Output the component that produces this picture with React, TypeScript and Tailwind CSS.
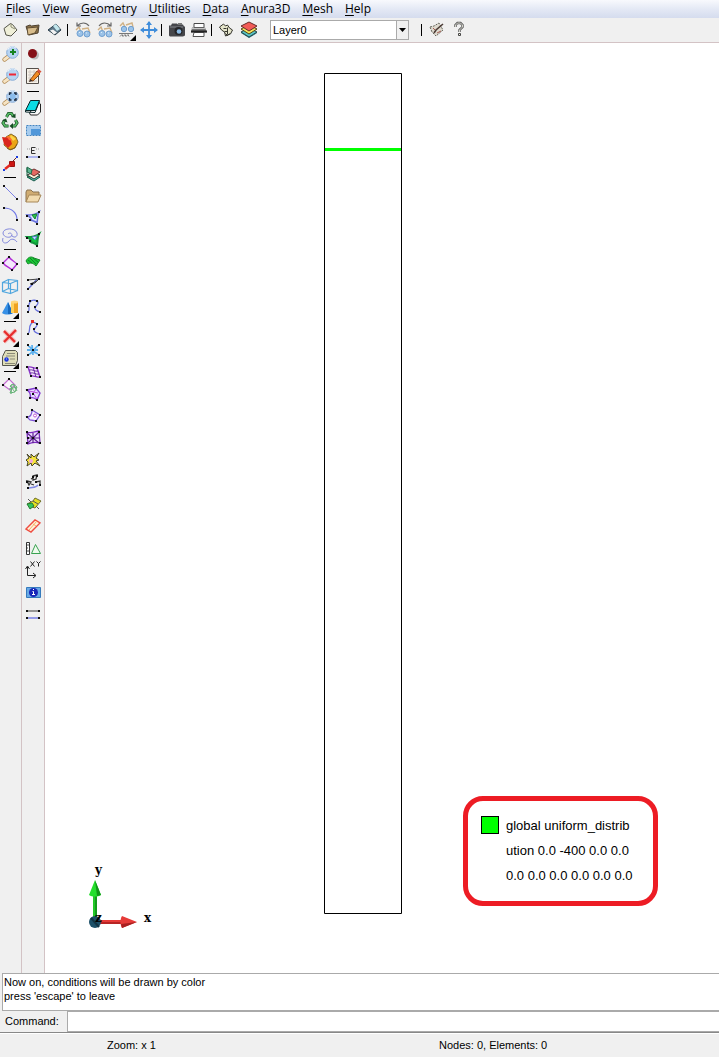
import { useState, type ReactNode } from "react";

type Point = [number, number];
type Tool = { name: string; icon: ReactNode; more?: boolean };

function Icon({ children }: { children: ReactNode }) {
  return (
    <svg viewBox="0 0 18 18" className="size-[18px] shrink-0" fill="none" aria-hidden="true">
      {children}
    </svg>
  );
}

function Nodes({ at, color = "#111" }: { at: Point[]; color?: string }) {
  return (
    <>
      {at.map(([x, y]) => (
        <rect key={`${x}-${y}`} x={x - 1} y={y - 1} width="2" height="2" fill={color} />
      ))}
    </>
  );
}

function Lens({ children }: { children?: ReactNode }) {
  return (
    <Icon>
      <path d="M7.500 11.500 3.500 14.500" stroke="#b08850" strokeWidth="4.4" strokeLinecap="round" />
      <path d="M7 12 3.500 14.500" stroke="#f6e4c4" strokeWidth="2.8" strokeLinecap="round" />
      <circle cx="11.500" cy="7.500" r="5.8" fill="#b7d4f2" stroke="#86abd6" />
      <path d="M6.500 5a5.500 5.500 0 0 1 8.500-2" stroke="#eef7ff" />
      {children}
    </Icon>
  );
}

function Glasses({ children }: { children: ReactNode }) {
  return (
    <Icon>
      <path d="m2 9 3-3 2 5M8 8l6-1 2 5" stroke="#d0b184" strokeWidth="1.4" />
      <circle cx="6" cy="12.500" r="3" fill="#9cc3e8" stroke="#6f9fd0" />
      <circle cx="13" cy="13" r="3" fill="#9cc3e8" stroke="#6f9fd0" />
      <path d="M5 11.500h1m6 .5h1" stroke="#dceefb" />
      {children}
    </Icon>
  );
}

const fileTools: Tool[] = [
  { name: "New", icon: <Icon><path d="M2 7.500 8.500 2.500l2 1L15 9l-6 6-5-1z" fill="#efefd8" stroke="#55554a" /><path d="M9 3v3l4 2" stroke="#8e8e72" /></Icon> },
  { name: "Open", icon: <Icon><path d="M2 5.500 6 4l1.500 1L15 4l-1 8-9 2z" fill="#8d7348" stroke="#4c4030" /><path d="m3 7 11-1-3 6-7 2z" fill="#d8bd8c" stroke="#5e4d32" /></Icon> },
  { name: "Save", icon: <Icon><path d="m2 9 8-6 5 6-6 5z" fill="#5d7888" stroke="#2c3e49" /><path d="m7 5 3-2 4 5-3 2z" fill="#c3e7ed" /><path d="m4 9.500 3-1 4 3-3 2z" fill="#f4f4f4" /></Icon> },
];
const viewTools: Tool[] = [
  { name: "Previous view", icon: <Glasses><path d="M3 5C7 1 12 1 15 5M3 1.500v3.500h4" stroke="#666" strokeWidth="1.2" /></Glasses> },
  { name: "Next view", icon: <Glasses><path d="M3 5C6 1 11 1 15 5M15 1.500v3.500h-4" stroke="#666" strokeWidth="1.2" /></Glasses> },
  { name: "Saved views", more: true, icon: <Icon><path d="m2 5 3-3 2 4M8 4l6-2 1 4" stroke="#d0b184" strokeWidth="1.4" /><circle cx="6" cy="8" r="2.7" fill="#9cc3e8" stroke="#6f9fd0" /><circle cx="13" cy="8" r="2.7" fill="#9cc3e8" stroke="#6f9fd0" /><path d="M1 12.500h14M2 15.500l2-2 1 2 2-2 1 2 2-2 1 2" stroke="#777" /></Icon> },
  { name: "Pan", icon: <Icon><path d="M9 1v16M1 9h16" stroke="#3f8ddb" strokeWidth="1.8" /><path d="m9 0 3 4H6zM9 18l3-4H6zM0 9l4-3v6zM18 9l-4-3v6z" fill="#3f8ddb" /></Icon> },
];
const printTools: Tool[] = [
  { name: "Snapshot", icon: <Icon><path d="M1 4.500h2l1-2h5l1 1h5l1 2h1v9l-2 1H2l-1-1z" fill="#45464a" /><path d="M2 6h13" stroke="#85878c" /><path d="M10 2h4v2h-4z" fill="#777" /><circle cx="10.500" cy="10" r="4" fill="#252629" /><circle cx="11" cy="10.500" r="2.3" fill="#8cbbe5" /></Icon> },
  { name: "Print", icon: <Icon><path d="M4 2.500h10v4H4z" fill="#fff" stroke="#4a4a4a" /><path d="M2 6.500h13l2 5H1z" fill="#777" /><path d="M2 7.500h13" stroke="#c4c4c4" /><path d="M4 11.500h10v4H3z" fill="#fff" stroke="#555" /><path d="M1 10.500h16" stroke="#222" strokeWidth="2" /></Icon> },
];
const modeTools: Tool[] = [
  { name: "Toggle process", icon: <Icon><path d="m1.500 6 4-3 2 2 2-1 2 3 3 2-2 4-5 2-1-4-3-2z" fill="#e5e5cb" stroke="#34342c" /><path d="M5.500 7.500h3m-2 3h3m0-4v7m-2-1 2 2 2-2" stroke="#35352d" /></Icon> },
  { name: "Layers", icon: <Icon><path d="m1 11 8 5 8-5v1l-8 5-8-5z" fill="#176a78" /><path d="m1 11 8-4 8 4-8 5z" fill="#54c7ca" stroke="#25474a" /><path d="m1 8 8-4 8 4-8 5z" fill="#f3e65b" stroke="#544318" /><path d="m1 5 8-4 8 4-8 5z" fill="#f25b56" stroke="#662b2b" /></Icon> },
];
const helpTools: Tool[] = [
  { name: "Preferences", icon: <Icon><path d="m2 6 4-1 5-3 4 7-7 6-4-4z" fill="#ddd9ce" stroke="#66665c" strokeDasharray="2 1" /><path d="m6 12 2-3 7-6" stroke="#4c3c36" strokeWidth="1.6" /><path d="m5 7 2 2m2 3 4-2" stroke="#a65b50" /></Icon> },
  { name: "Help", icon: <Icon><path d="M5.500 6V4l2-2h3l2 2v2L9.500 9v2" stroke="#555" strokeWidth="2.4" /><path d="M5.500 6V4l2-2h3l2 2v2L9.500 9v2" stroke="#f4f4e8" strokeWidth=".8" /><path d="M8.500 12.500h2v2h-2z" fill="#f4f4e8" stroke="#444" /></Icon> },
];

const leftTools: Tool[][] = [
  [
    { name: "Zoom in", icon: <Lens><path d="M12 4v6M9 7h6" stroke="#168322" strokeWidth="2" /></Lens> },
    { name: "Zoom out", icon: <Lens><path d="M8 7.500h7" stroke="#ee2635" strokeWidth="2" /></Lens> },
    { name: "Zoom frame", icon: <Lens><path d="M9 4.500h5.500v6H9z" fill="#8abcec" /><path d="M8.500 6V4h2m2.500 0h2v2m0 3v2h-2m-2.500 0h-2V9" stroke="#17263a" strokeWidth="1.4" /></Lens> },
    { name: "Redraw", icon: <Icon><path d="m5.500 6 2-3.500h3l2 3M14.500 9l1.500 3-2 3h-3M7.500 15H4l-2-3 2-3" stroke="#174e24" strokeWidth="3" /><path d="m5.500 6 2-3.500h3l2 3M14.500 9l1.500 3-2 3h-3M7.500 15H4l-2-3 2-3" stroke="#58bd65" strokeWidth="1.6" /><path d="m10 6 4.500 1V2.500zM12 12v6l-3.500-3zM1 9.500l4-2 1.500 4z" fill="#174e24" /></Icon> },
    { name: "Render", icon: <Icon><path d="m5 4 5-3 5 3 2 5-3 6-5 2-6-5z" fill="#eba515" stroke="#856b25" /><path d="m1 4 8 1 2 6-4 4-4-4z" fill="#d9261d" /><path d="m5 3 5 1 2 4-4-1z" fill="#ff6b31" /><path d="m10 2 5 4-3 2-3-4z" fill="#f9d548" /><path d="M6 15c3 3 8 1 10-4" stroke="#805918" /></Icon> },
    { name: "Label", icon: <Icon><path d="M3 15 15 3" stroke="#6c2222" /><path d="M8.500 6.500h5v5h-5z" fill="#cc1714" stroke="#9a1411" /><path d="m4 14 5-4" stroke="#e22720" strokeWidth="2.5" /><Nodes at={[[3, 15], [16, 2]]} color="#1a3ce0" /></Icon> },
  ],
  [
    { name: "Create line", icon: <Icon><path d="m3 3 13 13" stroke="#7c82e5" /><Nodes at={[[3, 3], [16, 16]]} /></Icon> },
    { name: "Create arc", icon: <Icon><path d="M3 3c8 0 13 5 13 12" stroke="#7078e6" strokeWidth="1.2" /><Nodes at={[[3, 3], [16, 15]]} /></Icon> },
    { name: "Create curve", icon: <Icon><path d="M7 7c3-3 6 2 2 3-3 1-7-1-7-4 0-5 12-6 14 0 1 5-4 5-6 2M2 11c-2 6 4 6 6 3s6-2 8 1" stroke="#858bdd" /></Icon> },
  ],
  [
    { name: "Create surface", icon: <Icon><path d="M8 2c2 3 5 4 8 7l-5 6C9 12 5 12 2 8z" fill="#f4e8fc" stroke="#b02ad7" strokeWidth="1.4" /><Nodes at={[[8, 2], [16, 9], [11, 15], [2, 8]]} /></Icon> },
    { name: "Create volume", icon: <Icon><path d="m1.500 5.500 8 1v10l-8-2zM7.500 2.500l9 1v10l-9-2zM1.500 5.500l6-3m2 4 7-3m-7 13 7-3m-15 1 6-3" stroke="#51a7de" strokeWidth="1.200" /></Icon> },
    { name: "Create object", more: true, icon: <Icon><path d="M1 14 7 3l5 11c-3 2-8 2-11 0z" fill="#3690e6" /><path d="m7 3 5 11c-2 1-3 1-5 1z" fill="#1769be" /><path d="M10 3h7v11h-7z" fill="#efa321" /><path d="M10 3h3v11h-3z" fill="#ffd05b" /><ellipse cx="13.500" cy="3" rx="3.5" ry="1.5" fill="#ffd67b" /></Icon> },
  ],
  [
    { name: "Delete", more: true, icon: <Icon><path d="m3 4 11 11M15 3 3 15" stroke="#f3b2b0" strokeWidth="4" /><path d="m3 4 11 11M15 3 3 15" stroke="#e62b2b" strokeWidth="2" /></Icon> },
    { name: "List", more: true, icon: <Icon><path d="M4.500 1.500h10l2 2v8l-2 5h-13v-9z" fill="#deddb9" stroke="#55554c" /><path d="M6 4.500h8M5 7h9M9 10h5M4 14.500h10" stroke="#8a8a78" /><circle cx="5.500" cy="10.500" r="2.2" fill="#1a34e0" /><path d="M5 10h1" stroke="#a5b9ff" /></Icon> },
  ],
  [
    { name: "Edit mesh", icon: <Icon><path d="m2 8 6-6 6 6-5 5z" fill="#faf3fb" stroke="#c36bd0" strokeWidth="1.2" /><path d="m9 9 3-2 4 3-2 5-5 1 2-5zM8 12l8-2m-7-1 5 6m-3-8-1 10M12 7l4 7" stroke="#66b377" /><Nodes at={[[2, 8], [8, 2]]} /></Icon> },
  ],
];

const rightTop: Tool[] = [
  { name: "Point", icon: <Icon><circle cx="10.500" cy="10" r="4.5" fill="#bababa" /><circle cx="8.500" cy="8.500" r="4.5" fill="#851017" /></Icon> },
  { name: "Edit notes", icon: <Icon><path d="M2.500 1.500h12v15h-12z" fill="#f7f2e8" stroke="#55504c" /><path d="M4 5h9M4 8h9M4 11h9M4 14h9M6 3v12m4-12v12" stroke="#d2cac5" /><path d="m6 13 7-9 3 3-7 7z" fill="#f28a21" stroke="#8c4d17" /><path d="m13 4 1.500-2 3 2.500-2 2z" fill="#d95239" /><path d="m5 15 1-3 3 2z" fill="#3d2b23" /></Icon> },
];
const rightTools: Tool[] = [
  { name: "Data", icon: <Icon><path d="m14 3 2.500 2v8l-3 3h-7l-1-2z" fill="#fafafa" stroke="#222" /><path d="M6.500 1.500h9l-4 10h-10z" fill="#0bdce4" stroke="#08272a" /><path d="M1.500 11.500v1.500l9.500.5 4.500-11" stroke="#08272a" /></Icon> },
  { name: "Select region", icon: <Icon><path d="M2.500 4.500h14v10h-14z" fill="#a6ccef" stroke="#4384c0" strokeDasharray="2 1" /><path d="M7 8h9v6H7z" fill="#5097d9" /></Icon> },
  { name: "Elements", icon: <Icon><path d="M3 6h3m6 0h3" stroke="#999" strokeDasharray="1 1" /><path d="M11.500 4.500h-4v6h4M7.500 7.500h3" stroke="#333" /><path d="M4 14h11" stroke="#9aa4f1" strokeWidth="1.5" /><Nodes at={[[3, 14], [15, 14]]} /></Icon> },
  { name: "Layer tools", icon: <Icon><path d="m3 12 7-3 6 3-6 4z" fill="#4cc4b4" stroke="#1c5a4a" /><path d="m3 10 7-3 6 3-6 4z" fill="#f6f2d8" stroke="#333" /><path d="m4 7 6-3 6 3-6 4z" fill="#e66a62" stroke="#71302e" /><path d="m3 2 5 3-1 4-4-2z" fill="#5fb592" stroke="#226b4b" /><path d="M3 3v8l5 4" stroke="#226b4b" /></Icon> },
  { name: "Group", icon: <Icon><path d="M2 15V5l1-2h4l2 2h6v3" fill="#d0ac72" stroke="#8b7350" /><path d="M5 8h12l-3 7H2z" fill="#f2dbae" stroke="#a78758" /></Icon> },
  { name: "Surface by points", icon: <Icon><path d="M3 6c5 0 9-1 12-3-2 4-1 7-2 11-2-2-4-2-6-3 1-3-2-3-4-5z" fill="#dfe6ff" stroke="#6771dc" strokeWidth="1.5" /><path d="m8 6 5-1-2 5z" fill="#28c84e" stroke="#158131" /><Nodes at={[[3, 7], [15, 3], [13, 15], [6, 11]]} /></Icon> },
  { name: "Filled surface", icon: <Icon><path d="M3 6c5 0 9-1 12-3-2 4-1 7-2 11-2-2-4-2-6-3 1-3-2-3-4-5z" fill="#12c840" stroke="#12963c" strokeWidth="2" /><path d="m8 6 5-1-2 4z" fill="#c4e5fb" stroke="#5b78d0" /><Nodes at={[[3, 7], [15, 3], [13, 15], [6, 10]]} /></Icon> },
  { name: "Parametric surface", icon: <Icon><path d="M2 8c2-4 5-5 8-3 2 1 4 1 6 2l-4 6c-4-4-6-3-8-2z" fill="#18c834" stroke="#16872a" /><path d="m4 7 4 3M6 5l6 6M9 5l5 4" stroke="#128027" /></Icon> },
  { name: "Tangent line", icon: <Icon><path d="M4 14c3-3 6-6 9-10" stroke="#6570d6" strokeWidth="1.3" /><path d="m3 5 12-1-4 4-5 1 7-3" stroke="#444" /><Nodes at={[[4, 14], [4, 5], [15, 4], [8, 9]]} /></Icon> },
  { name: "Spline", icon: <Icon><path d="M4 15c3-3-1-6 2-10 2-3 8-2 8 1 0 2-3 3-3 5s2 3 5 4" stroke="#6972dd" strokeWidth="1.3" /><Nodes at={[[4, 15], [4, 9], [6, 4], [13, 4], [11, 10], [16, 15]]} /></Icon> },
  { name: "Edit spline", icon: <Icon><path d="M4 15c3-3 0-6 3-10 2-3 6-1 6 1 0 2-3 3-3 5s2 3 6 4" stroke="#6972dd" strokeWidth="1.3" /><Nodes at={[[4, 15], [13, 5], [10, 10], [16, 15]]} /><path d="M7 1h3v3H7z" fill="#e42c27" /></Icon> },
  { name: "Explode", icon: <Icon><path d="M4 5c4 1 3 6 10 8M4 14c5-2 6-7 11-10M8 4l1 10M3 9h11" stroke="#5ab0ee" strokeWidth="1.8" /><Nodes at={[[4, 4], [15, 4], [4, 14], [15, 14], [9, 9]]} /></Icon> },
  { name: "Ruled surface", icon: <Icon><path d="M4 4c4-1 6 2 9 1l3 9c-4 1-6-2-9-1z" fill="#f5e7fb" stroke="#8a32c9" strokeWidth="1.4" /><path d="M5 7c4-1 6 2 9 1M6 10c4-1 6 2 9 1M9 4l3 10" stroke="#6b2fa3" /><Nodes at={[[3, 4], [13, 5], [16, 14], [7, 13]]} /></Icon> },
  { name: "Swept surface", icon: <Icon><path d="m3 5 9-2 4 5-3 7c-2-2-4-3-7-2 1-3 0-6-3-8z" fill="#e5dcff" stroke="#8138d2" strokeWidth="1.4" /><path d="m12 4-3 4 4 6M5 6l9 2" stroke="#b64adb" /><Nodes at={[[3, 5], [12, 3], [13, 15], [6, 13], [9, 9]]} /></Icon> },
  { name: "Surface with hole", icon: <Icon><path d="m8 3 8 5-4 6-6-1-3-3c4 0 5-3 5-7z" fill="#f8f1ff" stroke="#7d55d6" strokeWidth="1.3" /><circle cx="11" cy="8.500" r="1.500" fill="#fff" stroke="#c05bd3" /><Nodes at={[[8, 3], [16, 8], [12, 14], [3, 10]]} /></Icon> },
  { name: "Surface mesh", icon: <Icon><path d="M3 3c5 2 8-1 12-1l1 12c-4-1-8-1-12 1z" fill="#eddcff" stroke="#7d2bc0" strokeWidth="1.3" /><path d="m3 4 12 10M4 14 15 3M4 9h12M9 4v10" stroke="#5a1f8c" strokeWidth="1.2" /><Nodes at={[[3, 3], [15, 3], [16, 14], [3, 14], [9, 9], [4, 9]]} /></Icon> },
  { name: "Intersect", icon: <Icon><path d="m3 3 4 4V3l3 3 5-4-3 5 3 2-3 1 4 5-5-3-3 3-1-3-4 3 1-4-2-2 3-2z" fill="#f6e53b" stroke="#454229" /><circle cx="7" cy="10" r="2" fill="#f2a7dc" /></Icon> },
  { name: "Boolean operation", icon: <Icon><path d="M5 15c3-1 7 0 9-3" stroke="#8189e2" strokeWidth="1.4" /><path d="m3 8 4 1-2 3zM9 3l4-1-1 4-3 1zM12 9l4-1v4M7 6l2-1M7 11l3 1" stroke="#343434" strokeWidth="1.3" /><Nodes at={[[3, 9], [9, 4], [13, 3], [12, 9], [16, 12], [4, 15]]} /></Icon> },
  { name: "Contact", icon: <Icon><path d="m3 9 6-3 2-3 6 3-6 7-3-1z" fill="#e3df24" stroke="#70702c" /><path d="m3 9 5-1 2 3-4 3z" fill="#35c35c" stroke="#277c34" /><path d="m4 4 3 3M12 11l3 3M9 6l5 3" stroke="#555" /></Icon> },
  { name: "Plane", icon: <Icon><path d="m2 12 9-9 5 3-9 9z" fill="#fff1dc" stroke="#ef4c40" strokeWidth="1.4" /><path d="m5 13 8-9M9 7l3 2" stroke="#f4b067" /></Icon> },
  { name: "Dimensions", icon: <Icon><path d="M2.500 3.500h3v12h-3z" fill="#fff" stroke="#333" /><path d="M3 6h2M3 9h1M3 12h2" stroke="#555" /><path d="m7.500 14.500 4-9 5 9z" fill="#eefbed" stroke="#39a251" /></Icon> },
  { name: "Coordinates", icon: <Icon><path d="M3.500 6v8.500h8M1.500 8l2-3 2 3M9 12l3 2.500L9 17M6.500.5l4 5m0-5-4 5M12.500.5l2 2 2-2m-2 2v3" stroke="#222" /></Icon> },
  { name: "Information", icon: <Icon><path d="M2.500 4.500h14v10h-14z" fill="#68a9e5" stroke="#367abd" /><circle cx="9.500" cy="9.500" r="4.5" fill="#1725b8" /><path d="M8.500 8.500h1v3m-1.500 0h3M9 6.500h1" stroke="#fff" /></Icon> },
  { name: "Distance", icon: <Icon><path d="M3 6h12" stroke="#777" strokeWidth="1.500" /><path d="M3 13h12" stroke="#969ce9" strokeWidth="2" /><Nodes at={[[3, 6], [15, 6], [3, 13], [15, 13]]} /></Icon> },
];

function ToolButton({ tool }: { tool: Tool }) {
  return (
    <button type="button" aria-label={tool.name} className="relative flex h-[22px] w-[22px] shrink-0 items-center justify-center">
      {tool.icon}
      {tool.more && (
        <svg viewBox="0 0 6 6" className="absolute right-0.5 bottom-0 size-1.5" aria-hidden="true">
          <path d="M6 0v6H0z" fill="#000" />
        </svg>
      )}
    </button>
  );
}

function Tools({ items }: { items: Tool[] }) {
  return <>{items.map((tool) => <ToolButton key={tool.name} tool={tool} />)}</>;
}

function BarRule() {
  return <span className="mr-1 ml-px h-3 w-px bg-black" />;
}

const menus = ["Files", "View", "Geometry", "Utilities", "Data", "Anura3D", "Mesh", "Help"];

function LegendText({ children }: { children: ReactNode }) {
  return <span className="col-start-2 whitespace-nowrap">{children}</span>;
}

export default function App() {
  const [command, setCommand] = useState("");
  return (
    <div className="flex min-h-screen flex-col bg-[#f0f0f0] font-['Liberation_Sans',Arial,sans-serif] text-[11px] text-black">
      <nav className="flex h-[18px] items-center bg-linear-to-b from-[#f8f9fd] via-[#e4e9f5] to-[#d5dcee] font-['Open_Sans','Noto_Sans',sans-serif] text-xs leading-4">
        {menus.map((name) => (
          <button type="button" key={name} className="px-1.5">
            <span className="underline underline-offset-2">{name[0]}</span>
            {name.slice(1)}
          </button>
        ))}
      </nav>

      <header className="flex h-[25px] items-center border-b border-[#d3c3c5]">
        <Tools items={fileTools} />
        <BarRule />
        <Tools items={viewTools} />
        <BarRule />
        <Tools items={printTools} />
        <BarRule />
        <Tools items={modeTools} />
        <div className="relative ml-2.5 h-5 w-[139px]">
          <select aria-label="Layer" className="h-full w-full appearance-none rounded-none border border-[#aaa] bg-white pl-0.5 text-[11px] outline-none">
            <option>Layer0</option>
          </select>
          <svg viewBox="0 0 12 18" className="pointer-events-none absolute top-px right-px h-[18px] w-3" aria-hidden="true">
            <path d="M0 0h12v18H0z" fill="#f0f0f0" />
            <path d="M.5 0v18" stroke="#aaa" />
            <path d="M3 7h7l-3.500 4z" fill="#000" />
          </svg>
        </div>
        <span className="mr-1 ml-3 h-3 w-px bg-black" />
        <Tools items={helpTools} />
      </header>

      <main className="flex flex-1">
        <aside className="flex w-[22px] flex-col border-r border-[#d3c3c5]">
          {leftTools.map((group, i) => (
            <div key={group[0].name} className="flex flex-col">
              {i > 0 && <span className="mt-0.5 mb-[3px] ml-1 h-px w-3 bg-black" />}
              <div className="-ml-px flex flex-col"><Tools items={group} /></div>
            </div>
          ))}
        </aside>
        <aside className="flex w-[23px] flex-col border-r border-[#d3c3c5]">
          <Tools items={rightTop} />
          <span className="mt-1 mb-[5px] ml-[5px] h-px w-3 bg-black" />
          <Tools items={rightTools} />
        </aside>

        <section aria-label="Model view" className="relative flex-1 bg-white">
          <svg viewBox="0 0 78 841" className="absolute top-[30px] left-[279px] h-[841px] w-[78px]" fill="none" aria-hidden="true">
            <path d="M.5.5h77v840H.5z" stroke="#000" />
            <path d="M1 76.500h76" stroke="#0f0" strokeWidth="3" />
          </svg>

          <svg viewBox="0 0 80 80" className="absolute top-[815px] left-[35px] size-20" aria-hidden="true">
            <path d="M13 34h4v28h-4z" fill="#22c928" />
            <path d="M15 34h2v28h-2z" fill="#159b1d" />
            <path d="m15 22 6 15c-3 2-9 2-12 0z" fill="#24df2c" />
            <path d="m15 22 6 15-4 1z" fill="#119518" />
            <path d="M18 62h25v4H18z" fill="#e63a38" />
            <path d="M18 64h25v2H18z" fill="#b72424" />
            <path d="m57 64-15-6c-2 3-2 9 0 12z" fill="#e63a38" />
            <path d="m57 64-16 2 1 4z" fill="#a82020" />
            <circle cx="15" cy="64" r="6" fill="#1c5068" />
            <path d="m11 60 8 9" stroke="#123344" strokeWidth="2" />
            <g className="font-['DejaVu_Serif',serif] text-[12px] font-bold" fill="#000">
              <text x="15" y="16">y</text>
              <text x="64" y="64">x</text>
              <text x="15" y="64">z</text>
            </g>
          </svg>

          <div className="absolute top-[753px] left-[418px] grid h-[110px] w-[195px] auto-rows-[25px] grid-cols-[18px_1fr] content-center items-center gap-x-[7px] rounded-[20px] border-[5px] border-[#ed1c24] pl-[13px] text-[13px]">
            <span className="mt-0.5 size-[18px] self-start border border-black bg-[#00ff00]" />
            <LegendText>global uniform_distrib</LegendText>
            <LegendText>ution 0.0 -400 0.0 0.0</LegendText>
            <LegendText>0.0 0.0 0.0 0.0 0.0 0.0</LegendText>
          </div>
        </section>
      </main>

      <footer className="flex flex-col">
        <div role="log" className="ml-0.5 h-[38px] border border-r-0 border-[#aaa] bg-white px-px py-px leading-[14px]">
          <p>Now on, conditions will be drawn by color</p>
          <p>press 'escape' to leave</p>
        </div>
        <div className="flex h-[22px] items-center border-b border-[#888]">
          <label htmlFor="command" className="w-[67px] pl-[5px]">Command:</label>
          <input id="command" value={command} onChange={(e) => setCommand(e.target.value)} className="h-[21px] min-w-0 flex-1 border border-r-0 border-[#aaa] bg-white px-1 outline-none" />
        </div>
        <div className="grid h-6 grid-cols-[331fr_388fr] items-center border-t border-white">
          <span className="pl-[107px]">Zoom: x 1</span>
          <span className="pl-[108px]">Nodes: 0, Elements: 0</span>
        </div>
      </footer>
    </div>
  );
}
